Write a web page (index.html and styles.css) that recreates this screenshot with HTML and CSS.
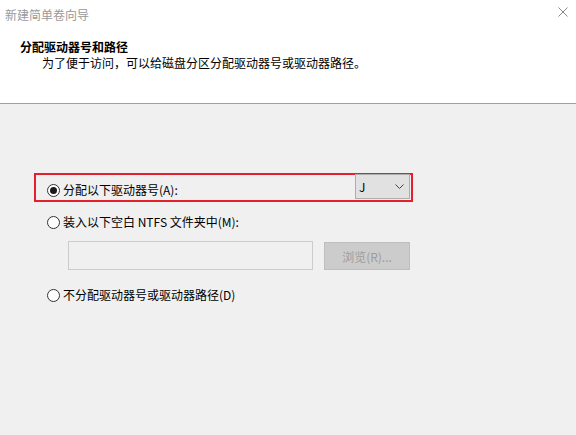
FILE: index.html
```html
<!DOCTYPE html>
<html lang="zh-CN">
<head>
<meta charset="utf-8">
<title>新建简单卷向导</title>
<link rel="stylesheet" href="styles.css">
</head>
<body>
<div class="window">
  <div class="titlebar">
    <span class="title">新建简单卷向导</span>
    <svg class="close" width="10" height="10" viewBox="0 0 10 10"><path d="M0.5 0.5 L9.5 9.5 M9.5 0.5 L0.5 9.5" stroke="#8a8a8a" stroke-width="1" fill="none"/></svg>
  </div>
  <div class="header">
    <div class="h-title">分配驱动器号和路径</div>
    <div class="h-sub">为了便于访问，可以给磁盘分区分配驱动器号或驱动器路径。</div>
  </div>
  <div class="content">
    <div class="row-highlight">
      <label class="opt opt-first"><span class="radio checked"></span><span>分配以下驱动器号(A):</span></label>
      <div class="combo"><span class="combo-val">J</span><svg width="9" height="5" viewBox="0 0 9 5"><path d="M0.5 0.5 L4.5 4.5 L8.5 0.5" stroke="#444" stroke-width="1" fill="none"/></svg></div>
    </div>
    <label class="opt opt-row"><span class="radio"></span><span>装入以下空白 NTFS 文件夹中(M):</span></label>
    <div class="path-row">
      <div class="field"></div>
      <div class="btn">浏览(R)...</div>
    </div>
    <label class="opt opt-row opt-last"><span class="radio"></span><span>不分配驱动器号或驱动器路径(D)</span></label>
  </div>
</div>
</body>
</html>
```
FILE: styles.css
```css
html, body {
  margin: 0;
  padding: 0;
  width: 576px;
  height: 435px;
  overflow: hidden;
  background: #f0f0f0;
}
.window {
  font-family: "Noto Sans CJK SC", "Noto Sans", sans-serif;
  font-size: 12px;
  color: #000;
  height: 435px;
  background: #f0f0f0;
}
.titlebar {
  height: 30px;
  background: #fff;
  display: flex;
  align-items: center;
  justify-content: space-between;
  padding: 0 8px 0 5px;
}
.title {
  color: #999;
  line-height: 16px;
  margin-top: -1px;
}
.close {
  display: block;
  margin-top: -6px;
}
.header {
  background: #fff;
  height: 74px;
  box-sizing: border-box;
  padding: 9px 0 0 20px;
  border-bottom: 1px solid #a0a0a0;
  line-height: 16px;
}
.h-title {
  font-weight: bold;
}
.h-sub {
  padding-left: 22px;
}
.content {
  padding-top: 69px;
}
.row-highlight {
  margin-left: 34px;
  width: 379px;
  height: 29px;
  box-sizing: border-box;
  border: 2px solid #e3202b;
  display: flex;
  align-items: flex-start;
  justify-content: space-between;
  padding: 0 1px 0 11px;
}
.opt {
  display: flex;
  align-items: center;
  gap: 3px;
  line-height: 16px;
  height: 16px;
}
.opt-first {
  margin-top: 7px;
}
.opt-row {
  margin: 12px 0 0 47px;
}
.opt-last {
  margin-top: 17px;
}
.radio {
  width: 13px;
  height: 13px;
  box-sizing: border-box;
  border: 1px solid #333;
  border-radius: 50%;
  background: #fff;
  display: flex;
  align-items: center;
  justify-content: center;
  flex: none;
}
.radio.checked::after {
  content: "";
  width: 7px;
  height: 7px;
  border-radius: 50%;
  background: #1a1a1a;
}
.combo {
  width: 55px;
  height: 25px;
  box-sizing: border-box;
  margin-top: -1px;
  background: #e1e1e1;
  border: 1px solid #adadad;
  display: flex;
  align-items: center;
  justify-content: space-between;
  padding: 0 5px 0 3px;
}
.combo-val {
  color: #000;
  line-height: 14px;
}
.path-row {
  display: flex;
  align-items: flex-start;
  margin: 11px 0 0 68px;
  gap: 11px;
}
.field {
  width: 245px;
  height: 29px;
  box-sizing: border-box;
  border: 1px solid #cccccc;
  background: #f0f0f0;
}
.btn {
  width: 86px;
  height: 28px;
  margin-top: 1px;
  box-sizing: border-box;
  border: 1px solid #bfbfbf;
  background: #cccccc;
  color: #9c9c9c;
  display: flex;
  align-items: center;
  justify-content: center;
}
```
